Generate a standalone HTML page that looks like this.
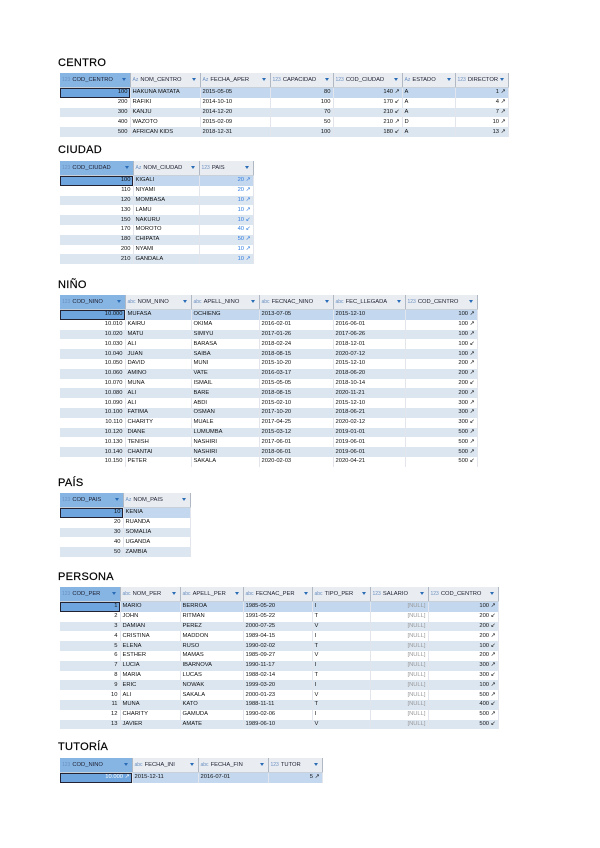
<!DOCTYPE html>
<html><head><meta charset="utf-8"><style>
body{margin:0;width:600px;height:848px;background:#fff;position:relative;font-family:"Liberation Sans",sans-serif;overflow:hidden}
h2{position:absolute;left:58px;margin:0;font-size:11px;font-weight:normal;color:#000;letter-spacing:.3px;-webkit-text-stroke:.2px #000}
table{position:absolute;border-collapse:collapse;table-layout:fixed;font-size:5.8px;color:#111}
td,th{padding:0 2px;white-space:nowrap;overflow:hidden;height:9.8px;line-height:9px}
th{height:14px;background:#e9edf2;font-weight:normal;text-align:left;color:#223;border-right:1px solid #b0b8c4;position:relative;border-bottom:1px solid #c8d0da}
th:after{content:"";position:absolute;right:4px;top:5px;border:2.5px solid transparent;border-top:3px solid #2a6bb5}
th.f{background:#86b5e4}
th i{font-style:normal;color:#6a8fc0;font-size:5px;margin-right:2px}
tr:nth-child(even) td{background:#dce6f1}
tr.s td{background:#c3d7ee}
tr.s td:first-child{background:#6ea5de;outline:1.5px solid #223;outline-offset:-1.5px}
td.r{text-align:right}
td{border-right:1px solid #e2e6ec}
td.l{color:#2f7de0}
</style></head><body>

<h2 style="top:57px">CENTRO</h2>
<table style="left:60px;top:73px;width:448px">
<colgroup><col style="width:70px"><col style="width:70px"><col style="width:70px"><col style="width:63px"><col style="width:69px"><col style="width:53px"><col style="width:53px"></colgroup>
<tr><th class="f"><i>123</i>COD_CENTRO</th><th><i>Az</i>NOM_CENTRO</th><th><i>Az</i>FECHA_APER</th><th><i>123</i>CAPACIDAD</th><th><i>123</i>COD_CIUDAD</th><th><i>Az</i>ESTADO</th><th><i>123</i>DIRECTOR</th></tr>
<tr class="s"><td class="r">100</td><td>HAKUNA MATATA</td><td>2015-05-05</td><td class="r">80</td><td class="r">140 ↗</td><td>A</td><td class="r">1 ↗</td></tr>
<tr><td class="r">200</td><td>RAFIKI</td><td>2014-10-10</td><td class="r">100</td><td class="r">170 ↙</td><td>A</td><td class="r">4 ↗</td></tr>
<tr><td class="r">300</td><td>KANJU</td><td>2014-12-20</td><td class="r">70</td><td class="r">210 ↙</td><td>A</td><td class="r">7 ↗</td></tr>
<tr><td class="r">400</td><td>WAZOTO</td><td>2015-02-09</td><td class="r">50</td><td class="r">210 ↗</td><td>D</td><td class="r">10 ↗</td></tr>
<tr><td class="r">500</td><td>AFRICAN KIDS</td><td>2018-12-31</td><td class="r">100</td><td class="r">180 ↙</td><td>A</td><td class="r">13 ↗</td></tr>
</table>

<h2 style="top:144px">CIUDAD</h2>
<table style="left:60px;top:161px;width:193px">
<colgroup><col style="width:73px"><col style="width:66px"><col style="width:54px"></colgroup>
<tr><th class="f"><i>123</i>COD_CIUDAD</th><th><i>Az</i>NOM_CIUDAD</th><th><i>123</i>PAIS</th></tr>
<tr class="s"><td class="r">100</td><td>KIGALI</td><td class="r l">20 ↗</td></tr>
<tr><td class="r">110</td><td>NIYAMI</td><td class="r l">20 ↗</td></tr>
<tr><td class="r">120</td><td>MOMBASA</td><td class="r l">10 ↗</td></tr>
<tr><td class="r">130</td><td>LAMU</td><td class="r l">10 ↗</td></tr>
<tr><td class="r">150</td><td>NAKURU</td><td class="r l">10 ↙</td></tr>
<tr><td class="r">170</td><td>MOROTO</td><td class="r l">40 ↙</td></tr>
<tr><td class="r">180</td><td>CHIPATA</td><td class="r l">50 ↗</td></tr>
<tr><td class="r">200</td><td>NYAMI</td><td class="r l">10 ↗</td></tr>
<tr><td class="r">210</td><td>GANDALA</td><td class="r l">10 ↗</td></tr>
</table>

<h2 style="top:279px">NIÑO</h2>
<table style="left:60px;top:295px;width:417px">
<colgroup><col style="width:65px"><col style="width:66px"><col style="width:68px"><col style="width:74px"><col style="width:72px"><col style="width:72px"></colgroup>
<tr><th class="f"><i>123</i>COD_NINO</th><th><i>abc</i>NOM_NINO</th><th><i>abc</i>APELL_NINO</th><th><i>abc</i>FECNAC_NINO</th><th><i>abc</i>FEC_LLEGADA</th><th><i>123</i>COD_CENTRO</th></tr>
<tr class="s"><td class="r">10.000</td><td>MUFASA</td><td>OCHIENG</td><td>2013-07-05</td><td>2015-12-10</td><td class="r">100 ↗</td></tr>
<tr><td class="r">10.010</td><td>KAIRU</td><td>OKIMA</td><td>2016-02-01</td><td>2016-06-01</td><td class="r">100 ↗</td></tr>
<tr><td class="r">10.020</td><td>MATU</td><td>SIMIYU</td><td>2017-01-26</td><td>2017-06-26</td><td class="r">100 ↗</td></tr>
<tr><td class="r">10.030</td><td>ALI</td><td>BARASA</td><td>2018-02-24</td><td>2018-12-01</td><td class="r">100 ↙</td></tr>
<tr><td class="r">10.040</td><td>JUAN</td><td>SAIBA</td><td>2018-08-15</td><td>2020-07-12</td><td class="r">100 ↗</td></tr>
<tr><td class="r">10.050</td><td>DAVID</td><td>MUNI</td><td>2015-10-20</td><td>2015-12-10</td><td class="r">200 ↗</td></tr>
<tr><td class="r">10.060</td><td>AMINO</td><td>VATE</td><td>2016-03-17</td><td>2018-06-20</td><td class="r">200 ↗</td></tr>
<tr><td class="r">10.070</td><td>MUNA</td><td>ISMAIL</td><td>2015-05-05</td><td>2018-10-14</td><td class="r">200 ↙</td></tr>
<tr><td class="r">10.080</td><td>ALI</td><td>BARE</td><td>2018-08-15</td><td>2020-11-21</td><td class="r">200 ↗</td></tr>
<tr><td class="r">10.090</td><td>ALI</td><td>ABDI</td><td>2015-02-10</td><td>2015-12-10</td><td class="r">300 ↗</td></tr>
<tr><td class="r">10.100</td><td>FATIMA</td><td>OSMAN</td><td>2017-10-20</td><td>2018-06-21</td><td class="r">300 ↗</td></tr>
<tr><td class="r">10.110</td><td>CHARITY</td><td>MUALE</td><td>2017-04-25</td><td>2020-02-12</td><td class="r">300 ↙</td></tr>
<tr><td class="r">10.120</td><td>DIANE</td><td>LUMUMBA</td><td>2015-03-12</td><td>2019-01-01</td><td class="r">500 ↗</td></tr>
<tr><td class="r">10.130</td><td>TENISH</td><td>NASHIRI</td><td>2017-06-01</td><td>2019-06-01</td><td class="r">500 ↗</td></tr>
<tr><td class="r">10.140</td><td>CHANTAI</td><td>NASHIRI</td><td>2018-06-01</td><td>2019-06-01</td><td class="r">500 ↗</td></tr>
<tr><td class="r">10.150</td><td>PETER</td><td>SAKALA</td><td>2020-02-03</td><td>2020-04-21</td><td class="r">500 ↙</td></tr>
</table>

<h2 style="top:477px">PAÍS</h2>
<table style="left:60px;top:493px;width:130px">
<colgroup><col style="width:63px"><col style="width:67px"></colgroup>
<tr><th class="f"><i>123</i>COD_PAIS</th><th><i>Az</i>NOM_PAIS</th></tr>
<tr class="s"><td class="r">10</td><td>KENIA</td></tr>
<tr><td class="r">20</td><td>RUANDA</td></tr>
<tr><td class="r">30</td><td>SOMALIA</td></tr>
<tr><td class="r">40</td><td>UGANDA</td></tr>
<tr><td class="r">50</td><td>ZAMBIA</td></tr>
</table>

<h2 style="top:571px">PERSONA</h2>
<table style="left:60px;top:587px;width:438px">
<colgroup><col style="width:60px"><col style="width:60px"><col style="width:63px"><col style="width:69px"><col style="width:58px"><col style="width:58px"><col style="width:70px"></colgroup>
<tr><th class="f"><i>123</i>COD_PER</th><th><i>abc</i>NOM_PER</th><th><i>abc</i>APELL_PER</th><th><i>abc</i>FECNAC_PER</th><th><i>abc</i>TIPO_PER</th><th><i>123</i>SALARIO</th><th><i>123</i>COD_CENTRO</th></tr>
<tr class="s"><td class="r">1</td><td>MARIO</td><td>BERROA</td><td>1985-05-20</td><td>I</td><td class="r" style="color:#999">[NULL]</td><td class="r">100 ↗</td></tr>
<tr><td class="r">2</td><td>JOHN</td><td>RITMAN</td><td>1991-05-22</td><td>T</td><td class="r" style="color:#999">[NULL]</td><td class="r">200 ↙</td></tr>
<tr><td class="r">3</td><td>DAMIAN</td><td>PEREZ</td><td>2000-07-25</td><td>V</td><td class="r" style="color:#999">[NULL]</td><td class="r">200 ↙</td></tr>
<tr><td class="r">4</td><td>CRISTINA</td><td>MADDON</td><td>1989-04-15</td><td>I</td><td class="r" style="color:#999">[NULL]</td><td class="r">200 ↗</td></tr>
<tr><td class="r">5</td><td>ELENA</td><td>RUSO</td><td>1990-02-02</td><td>T</td><td class="r" style="color:#999">[NULL]</td><td class="r">100 ↙</td></tr>
<tr><td class="r">6</td><td>ESTHER</td><td>MAMAS</td><td>1985-09-27</td><td>V</td><td class="r" style="color:#999">[NULL]</td><td class="r">200 ↗</td></tr>
<tr><td class="r">7</td><td>LUCIA</td><td>IBARNOVA</td><td>1990-11-17</td><td>I</td><td class="r" style="color:#999">[NULL]</td><td class="r">300 ↗</td></tr>
<tr><td class="r">8</td><td>MARIA</td><td>LUCAS</td><td>1988-02-14</td><td>T</td><td class="r" style="color:#999">[NULL]</td><td class="r">300 ↙</td></tr>
<tr><td class="r">9</td><td>ERIC</td><td>NOWAK</td><td>1999-03-20</td><td>I</td><td class="r" style="color:#999">[NULL]</td><td class="r">100 ↗</td></tr>
<tr><td class="r">10</td><td>ALI</td><td>SAKALA</td><td>2000-01-23</td><td>V</td><td class="r" style="color:#999">[NULL]</td><td class="r">500 ↗</td></tr>
<tr><td class="r">11</td><td>MUNA</td><td>KATO</td><td>1988-11-11</td><td>T</td><td class="r" style="color:#999">[NULL]</td><td class="r">400 ↙</td></tr>
<tr><td class="r">12</td><td>CHARITY</td><td>GAMUDA</td><td>1990-02-06</td><td>I</td><td class="r" style="color:#999">[NULL]</td><td class="r">500 ↗</td></tr>
<tr><td class="r">13</td><td>JAVIER</td><td>AMATE</td><td>1989-06-10</td><td>V</td><td class="r" style="color:#999">[NULL]</td><td class="r">500 ↙</td></tr>
</table>

<h2 style="top:741px">TUTORÍA</h2>
<table style="left:60px;top:758px;width:262px">
<colgroup><col style="width:72px"><col style="width:66px"><col style="width:70px"><col style="width:54px"></colgroup>
<tr><th class="f"><i>123</i>COD_NINO</th><th><i>abc</i>FECHA_INI</th><th><i>abc</i>FECHA_FIN</th><th><i>123</i>TUTOR</th></tr>
<tr class="s"><td class="r" style="color:#fff">10.000 ↗</td><td>2015-12-11</td><td>2016-07-01</td><td class="r">5 ↗</td></tr>
</table>
</body></html>
